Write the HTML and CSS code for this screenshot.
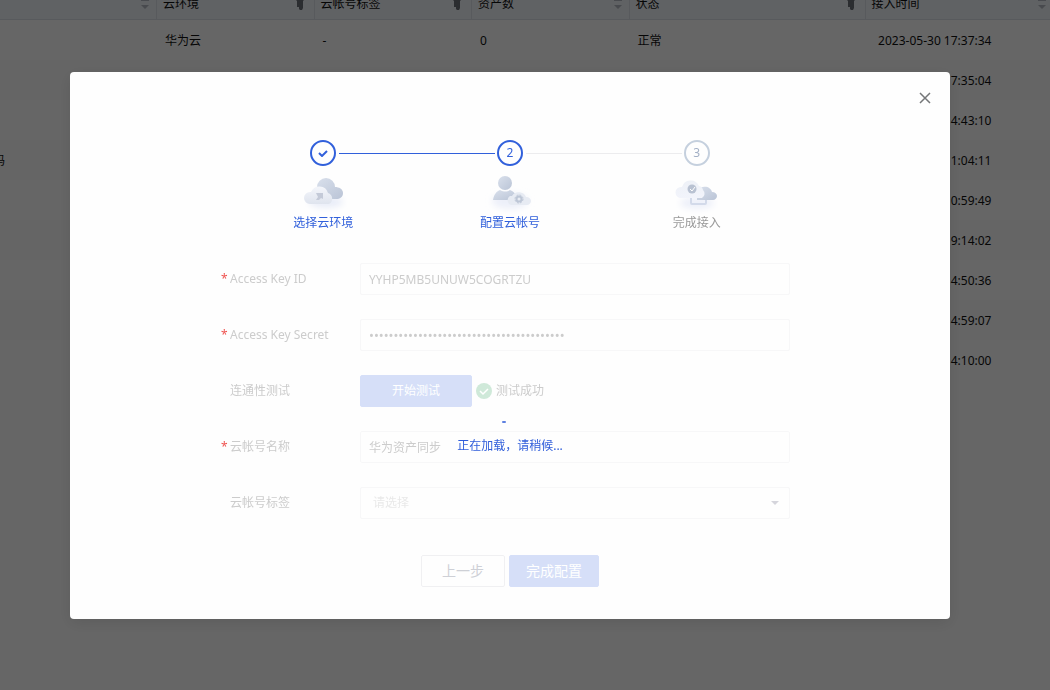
FILE: index.html
```html
<!DOCTYPE html>
<html lang="zh-CN">
<head>
<meta charset="utf-8">
<title>云帐号接入</title>
<link rel="stylesheet" href="styles.css">
</head>
<body>
<table class="accounts">
  <colgroup><col class="col-name"><col class="col-env"><col class="col-env"><col class="col-env"><col class="col-state"><col></colgroup>
  <thead>
    <tr>
      <th><div class="head head-end"><svg class="sort" viewBox="0 0 8 9"><path d="M0 0h8v1H0zM0 5h8L4 9z"/></svg></div></th>
      <th><div class="head">云环境<svg class="filter" viewBox="0 0 10 12"><path d="M0 0h10v1L8 3v7L7 12H5L4 11V9H2V3L0 1z"/></svg></div></th>
      <th><div class="head">云帐号标签<svg class="filter" viewBox="0 0 10 12"><path d="M0 0h10v1L8 3v7L7 12H5L4 11V9H2V3L0 1z"/></svg></div></th>
      <th><div class="head">资产数<svg class="sort" viewBox="0 0 8 9"><path d="M0 0h8v1H0zM0 5h8L4 9z"/></svg></div></th>
      <th><div class="head">状态<svg class="filter" viewBox="0 0 10 12"><path d="M0 0h10v1L8 3v7L7 12H5L4 11V9H2V3L0 1z"/></svg></div></th>
      <th><div class="head">接入时间<svg class="sort" viewBox="0 0 8 9"><path d="M0 0h8v1H0zM0 5h8L4 9z"/></svg></div></th>
    </tr>
  </thead>
  <tbody>
    <tr><td></td><td>华为云</td><td>-</td><td>0</td><td>正常</td><td><span class="time">2023-05-30 17:37:34</span></td></tr>
    <tr><td></td><td></td><td></td><td></td><td></td><td><span class="time">7:35:04</span></td></tr>
    <tr><td></td><td></td><td></td><td></td><td></td><td><span class="time">4:43:10</span></td></tr>
    <tr><td class="name"><span class="name-end">码</span></td><td></td><td></td><td></td><td></td><td><span class="time">1:04:11</span></td></tr>
    <tr><td></td><td></td><td></td><td></td><td></td><td><span class="time">0:59:49</span></td></tr>
    <tr><td></td><td></td><td></td><td></td><td></td><td><span class="time">9:14:02</span></td></tr>
    <tr><td></td><td></td><td></td><td></td><td></td><td><span class="time">4:50:36</span></td></tr>
    <tr><td></td><td></td><td></td><td></td><td></td><td><span class="time">4:59:07</span></td></tr>
    <tr><td></td><td></td><td></td><td></td><td></td><td><span class="time">4:10:00</span></td></tr>
  </tbody>
</table>

<div class="backdrop">
  <section class="dialog" role="dialog" aria-modal="true">
    <button class="close" type="button" aria-label="关闭"><svg viewBox="0 0 12 12"><path d="M1 1l10 10M11 1L1 11"/></svg></button>

    <ol class="steps">
      <li class="step step-done">
        <span class="marker"><svg class="tick" viewBox="0 0 10 8"><path d="M1 4l3 3 5-5"/></svg></span>
        <svg class="art" viewBox="0 0 44 36">
          <defs>
            <linearGradient id="back" x1="0" y1="0" x2="1" y2="1"><stop offset="0" stop-color="#d9e0ec"/><stop offset="1" stop-color="#bac4d6"/></linearGradient>
            <linearGradient id="front" x1="0" y1="0" x2="0" y2="1"><stop offset="0" stop-color="#f4f6fb"/><stop offset="1" stop-color="#dfe4ee"/></linearGradient>
            <linearGradient id="pale" x1="0" y1="0" x2="0" y2="1"><stop offset="0" stop-color="#eef1f7"/><stop offset="1" stop-color="#f2f4fb"/></linearGradient>
            <filter id="soft" x="-30%" y="-80%" width="160%" height="260%"><feGaussianBlur stdDeviation="3"/></filter>
          </defs>
          <ellipse cx="25" cy="27" rx="17" ry="6" fill="#e9edf8" filter="url(#soft)"/>
          <path d="M16 24V12a9 9 0 0 1 18 0c4 0 8 2 8 6s-3 6-7 6z" fill="url(#back)"/>
          <path d="M9 29a6 6 0 0 1 0-12h1a9 9 0 0 1 17 1 6 6 0 0 1 1 11z" fill="url(#front)"/>
          <path d="M15 18h7v6l-2-1-2 2h-3l2-3z" fill="#c4cad8"/>
        </svg>
        <span class="caption">选择云环境</span>
      </li>
      <li class="step step-current">
        <span class="marker">2</span>
        <svg class="art" viewBox="0 0 44 36">
          <ellipse cx="22" cy="26" rx="18" ry="8" fill="#edf0f9" filter="url(#soft)"/>
          <circle cx="17" cy="8" r="7" fill="url(#back)"/>
          <path d="M5 25c1-6 4-9 7-10 4 2 7 2 10 0 3 1 5 3 6 6v4z" fill="url(#back)"/>
          <path d="M23 30a5 5 0 0 1-1-9h2a8 8 0 0 1 14 1c3 0 5 2 5 4s-2 4-4 4z" fill="#e7ebf3"/>
          <circle cx="31" cy="24" r="2.5" fill="none" stroke="#bdc6d6" stroke-width="2"/>
          <circle cx="31" cy="24" r="4" fill="none" stroke="#bdc6d6" stroke-width="1" stroke-dasharray="2 1.14"/>
        </svg>
        <span class="caption">配置云帐号</span>
      </li>
      <li class="step step-next">
        <span class="marker">3</span>
        <svg class="art" viewBox="0 0 44 36">
          <ellipse cx="22" cy="28" rx="17" ry="6" fill="#edf0f9" filter="url(#soft)"/>
          <path d="M16 23v5q0 1 1 1h13q1 0 1-1v-4" fill="none" stroke="#d3daea" stroke-width="2"/>
          <path d="M22 25V16q2-4 6-4c4-1 8 1 9 5 3 0 5 2 5 4s-2 4-4 4z" fill="url(#back)"/>
          <path d="M6 23a5 5 0 0 1 0-11h1a9 9 0 0 1 17-1 5 5 0 0 1 4 4 5 5 0 0 1-1 8z" fill="url(#pale)"/>
          <circle cx="17" cy="14" r="4.5" fill="#b9c2d2"/>
          <path d="M15 14l2 2 3-4" fill="none" stroke="#fff"/>
        </svg>
        <span class="caption">完成接入</span>
      </li>
    </ol>

    <form class="form">
      <div class="row">
        <label class="label required" for="key-id">Access Key ID</label>
        <input class="field" id="key-id" type="text" value="YYHP5MB5UNUW5COGRTZU">
      </div>
      <div class="row">
        <label class="label required" for="key-secret">Access Key Secret</label>
        <input class="field secret" id="key-secret" type="password" value="0000000000000000000000000000000000000000">
      </div>
      <div class="row">
        <span class="label">连通性测试</span>
        <div class="test">
          <button class="button primary test-button" type="button">开始测试</button>
          <svg class="success" viewBox="0 0 16 16"><circle cx="8" cy="8" r="8"/><path d="M4 8l3 3 5-5"/></svg>
          <span>测试成功</span>
        </div>
      </div>
      <div class="row">
        <label class="label required" for="account-name">云帐号名称</label>
        <input class="field" id="account-name" type="text" value="华为资产同步">
      </div>
      <div class="row">
        <label class="label" for="account-tag">云帐号标签</label>
        <div class="select-wrap">
          <select class="field select" id="account-tag"><option>请选择</option></select>
          <svg class="arrow" viewBox="0 0 8 4"><path d="M0 0h8L4 4z"/></svg>
        </div>
      </div>
      <div class="actions">
        <button class="button previous" type="button">上一步</button>
        <button class="button primary finish" type="button">完成配置</button>
      </div>
      <div class="loading" role="status">
        <span class="spinner"></span>
        <span>正在加载，请稍候...</span>
      </div>
    </form>
  </section>
</div>
</body>
</html>
```
FILE: styles.css
```css
* { box-sizing: border-box; }

body {
  margin: 0;
  overflow: hidden;
  background: #fff;
  color: #111;
  font-family: "Noto Sans", "Noto Sans CJK SC", sans-serif;
  font-size: 12px;
  line-height: 16px;
}

button, input, select { margin: 0; font: inherit; }

/* Account list */
.accounts {
  width: 100%;
  border-collapse: separate;
  border-spacing: 0;
  table-layout: fixed;
}
.col-name { width: 157px; }
.col-env { width: 15%; }
.col-state { width: 236px; }
.accounts th {
  padding: 0 7px 11px 6px;
  border-right: 1px solid #dce1e8;
  border-bottom: 1px solid #dce1e8;
  background: #f0f4f9;
  font-weight: 400;
  text-align: left;
}
.accounts th:last-child { padding-right: 4px; border-right: 0; }
.head {
  display: flex;
  align-items: center;
  justify-content: space-between;
  height: 8px;
}
.head-end { justify-content: flex-end; }
.sort { width: 8px; height: 9px; fill: #b4b9c2; }
.filter { width: 10px; height: 12px; margin-right: 2px; fill: #6c7078; }
.accounts td {
  height: 40px;
  padding: 2px 8px 0;
}
.accounts tr:nth-child(even) td { background: #fdfdfd; }
.accounts .name { padding-left: 0; }
.name-end {
  display: flex;
  justify-content: flex-end;
  width: 5px;
  overflow: hidden;
}
.time { display: inline-block; width: 118px; text-align: right; white-space: nowrap; }

/* Dialog */
.backdrop {
  position: fixed;
  inset: 0;
  padding: 72px 100px 72px 70px;
  background: rgba(0, 0, 0, 0.6);
}
.dialog {
  position: relative;
  max-width: 880px;
  margin: 0 auto;
  padding: 68px 160px 32px 150px;
  border-radius: 4px;
  background: #fefefe;
  box-shadow: 0 4px 16px rgba(0, 0, 0, 0.1);
}
.close {
  position: absolute;
  top: 16px;
  right: 16px;
  display: grid;
  place-items: center;
  width: 18px;
  height: 20px;
  padding: 0;
  border: 0;
  background: none;
}
.close svg { width: 12px; height: 12px; fill: none; stroke: #747678; stroke-width: 1.5; }

/* Steps */
.steps {
  display: grid;
  grid-template-columns: repeat(3, 1fr);
  margin: 0 0 0 10px;
  padding: 0;
  list-style: none;
}
.step {
  position: relative;
  display: flex;
  flex-direction: column;
  align-items: center;
  color: #3160db;
}
.marker {
  display: grid;
  place-items: center;
  width: 26px;
  height: 26px;
  border: 2px solid #3160db;
  border-radius: 50%;
}
.tick { width: 10px; height: 8px; fill: none; stroke: #3160db; stroke-width: 2; }
.step:not(:last-child)::after {
  content: "";
  position: absolute;
  top: 13px;
  left: calc(50% + 16px);
  width: calc(100% - 31px);
  height: 1px;
  background: #3160db;
}
.step-current:not(:last-child)::after { background: #ececee; }
.step-next { color: #999; }
.step-next .marker { border-color: #c5d0de; color: #a3b0c6; }
.art { width: 44px; height: 36px; margin: 9px 0 4px; overflow: visible; }

/* Form under the loading veil */
.form { position: relative; margin-top: 32px; color: #ccc; }
.row {
  display: grid;
  grid-template-columns: 140px 1fr;
  align-items: center;
  height: 32px;
  margin-bottom: 24px;
}
.label { position: relative; padding-left: 10px; }
.required::before {
  content: "*";
  position: absolute;
  left: 1px;
  color: #ef5350;
}
.field {
  width: 100%;
  height: 32px;
  padding: 0 8px;
  border: 1px solid #f7f7f8;
  border-radius: 2px;
  background: #fefefe;
  color: #ccc;
}
.secret { font-size: 13px; }
.test { display: flex; align-items: center; gap: 4px; }
.success { width: 16px; height: 16px; fill: #cfe9d9; }
.success path { fill: none; stroke: #fff; stroke-width: 1.5; }
.button {
  height: 32px;
  padding: 0 16px;
  border: 1px solid #f0f0f2;
  border-radius: 2px;
  background: #fefefe;
  color: #ced0d6;
}
.primary { border-color: #d6dff8; background: #d6dff8; color: #fff; }
.test-button { width: 112px; }
.select-wrap { position: relative; }
.select { padding: 0 12px; appearance: none; color: #e9e9e9; }
.arrow {
  position: absolute;
  top: 14px;
  right: 11px;
  width: 8px;
  height: 4px;
  fill: #d5d5dc;
}
.actions {
  display: flex;
  justify-content: center;
  gap: 4px;
  padding: 12px 0 0 10px;
  font-size: 14px;
}
.previous { width: 84px; }
.finish { width: 90px; }
.loading {
  position: absolute;
  inset: 0 0 0 10px;
  display: flex;
  flex-direction: column;
  align-items: center;
  gap: 15px;
  padding-top: 158px;
  color: #2f5dda;
}
.spinner { width: 4px; height: 2px; margin-right: 12px; border-radius: 1px; background: #5e80e0; }
```
